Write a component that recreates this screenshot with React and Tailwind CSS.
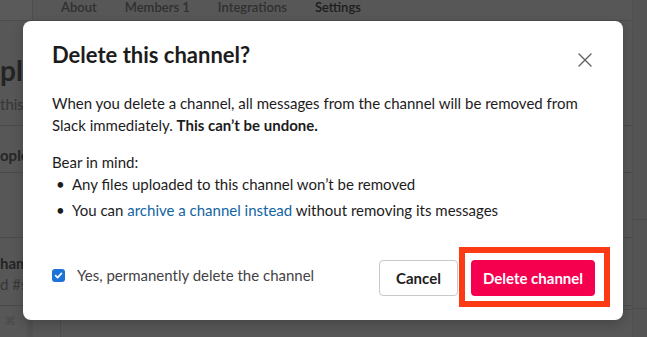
import React from "react";

const font = { fontFamily: "Lato, 'Noto Sans', sans-serif" };

const Check = () => (
  <span className="flex h-[13px] w-[13px] items-center justify-center rounded-[3px] bg-[#1d74d6]">
    <svg width="9" height="9" viewBox="0 0 10 10" fill="none">
      <path d="M1.8 5.2 4 7.4 8.3 2.6" stroke="#fff" strokeWidth="1.8" strokeLinecap="round" strokeLinejoin="round" />
    </svg>
  </span>
);

export default function App() {
  return (
    <div
      className="relative h-[337px] w-[647px] overflow-hidden bg-[#575757] text-[#262626]"
      style={font}
    >
      {/* page behind the overlay */}
      <div className="flex h-full">
        <div className="flex w-[632px] flex-col">
          <div className="flex h-[21px] items-start border-b border-[#4c4c4c]">
            <div className="h-full w-[33px] border-r border-[#4e4e4e] bg-[#5a5a5a]" />
            <div className="flex gap-[28px] pl-[28px] text-[13px] font-semibold leading-[14px] text-[#303030]">
              <span>About</span>
              <span>Members 1</span>
              <span>Integrations</span>
              <span className="text-[#1c1c1c]">Settings</span>
            </div>
          </div>
          <div className="mt-[34px] text-[28px] font-bold leading-[30px] text-[#242424]">pl</div>
          <div className="mt-[10px] text-[15px] leading-[18px] text-[#363636]">this</div>
          <div className="mt-[12px] border-b border-[#4a4a4a]" />
          <div className="mt-[20px] text-[15px] font-bold leading-[18px] text-[#262626]">ople</div>
          <div className="mt-[8px] border-b border-[#4a4a4a]" />
          <div className="mt-[64px] border-b border-[#4a4a4a]" />
          <div className="mt-[16px] text-[15px] font-bold leading-[18px] text-[#242424]">ham</div>
          <div className="mt-[3px] text-[15px] leading-[18px] text-[#363636]">d #s</div>
          <div className="mt-[12px] flex flex-1 border-t border-[#4a4a4a]">
            <div className="w-[27px] pl-[4px] pt-[6px] text-[12px] text-[#4a4a4a]">&#x2318;</div>
            <div className="w-[6px] bg-[#525252]" />
            <div className="ml-[27px] mt-[3px] flex-1 border-l border-t border-[#4e4e4e]" />
          </div>
        </div>
        <div className="flex flex-1 flex-col border-l border-[#505050] bg-[#545454]">
          <div className="h-[220px] border-b border-[#4b4b4b]" />
          <div className="h-[89px] border-b border-[#4b4b4b]" />
        </div>
      </div>

      {/* dialog */}
      <div className="absolute left-[23px] top-[21px] flex h-[299px] w-[600px] flex-col rounded-[8px] bg-white px-[29px] pt-[20px] shadow-[0_4px_12px_rgba(0,0,0,0.2)]">
        <div className="flex items-start justify-between">
          <h2 className="text-[22px] font-bold leading-[28px] text-[#1d1c1d]">Delete this channel?</h2>
          <button className="mr-[2px] mt-[12px] text-[#616061]">
            <svg width="14" height="14" viewBox="0 0 14 14" fill="none">
              <path d="M1 1l12 12M13 1 1 13" stroke="currentColor" strokeWidth="1.4" strokeLinecap="round" />
            </svg>
          </button>
        </div>

        <div className="mt-[23px] text-[15px] leading-[22px] text-[#1d1c1d]">
          <div>When you delete a channel, all messages from the channel will be removed from</div>
          <div>
            Slack immediately. <span className="font-bold">This can’t be undone.</span>
          </div>
        </div>

        <p className="mt-[15px] text-[15px] leading-[22px] text-[#1d1c1d]">Bear in mind:</p>
        <ul className="text-[15px] leading-[22px] text-[#1d1c1d]">
          <li className="flex">
            <span className="w-[20px] pl-[4px]">•</span>
            <span>Any files uploaded to this channel won’t be removed</span>
          </li>
          <li className="mt-[4px] flex">
            <span className="w-[20px] pl-[4px]">•</span>
            <span>
              You can <a className="text-[#1264a3]">archive a channel instead</a> without removing its
              messages
            </span>
          </li>
        </ul>

        <div className="mt-[39px] flex items-start">
          <label className="mt-[6px] flex flex-1 items-center gap-[12px] text-[15px] leading-[18px] text-[#454245]">
            <Check />
            <span>Yes, permanently delete the channel</span>
          </label>
          <button className="h-[36px] w-[79px] rounded-[4px] border border-[#c9c9c9] text-[15px] font-bold text-[#1d1c1d]">
            Cancel
          </button>
          <div className="relative ml-[13px] mr-[-1px]">
            <button className="h-[36px] w-[124px] rounded-[4px] bg-[#f5004f] text-[15px] font-bold text-white">
              Delete channel
            </button>
            <div className="absolute -bottom-[11px] -left-[12px] -right-[15px] -top-[13px] border-[6px] border-[#fc3a14]" />
          </div>
        </div>
      </div>
    </div>
  );
}
